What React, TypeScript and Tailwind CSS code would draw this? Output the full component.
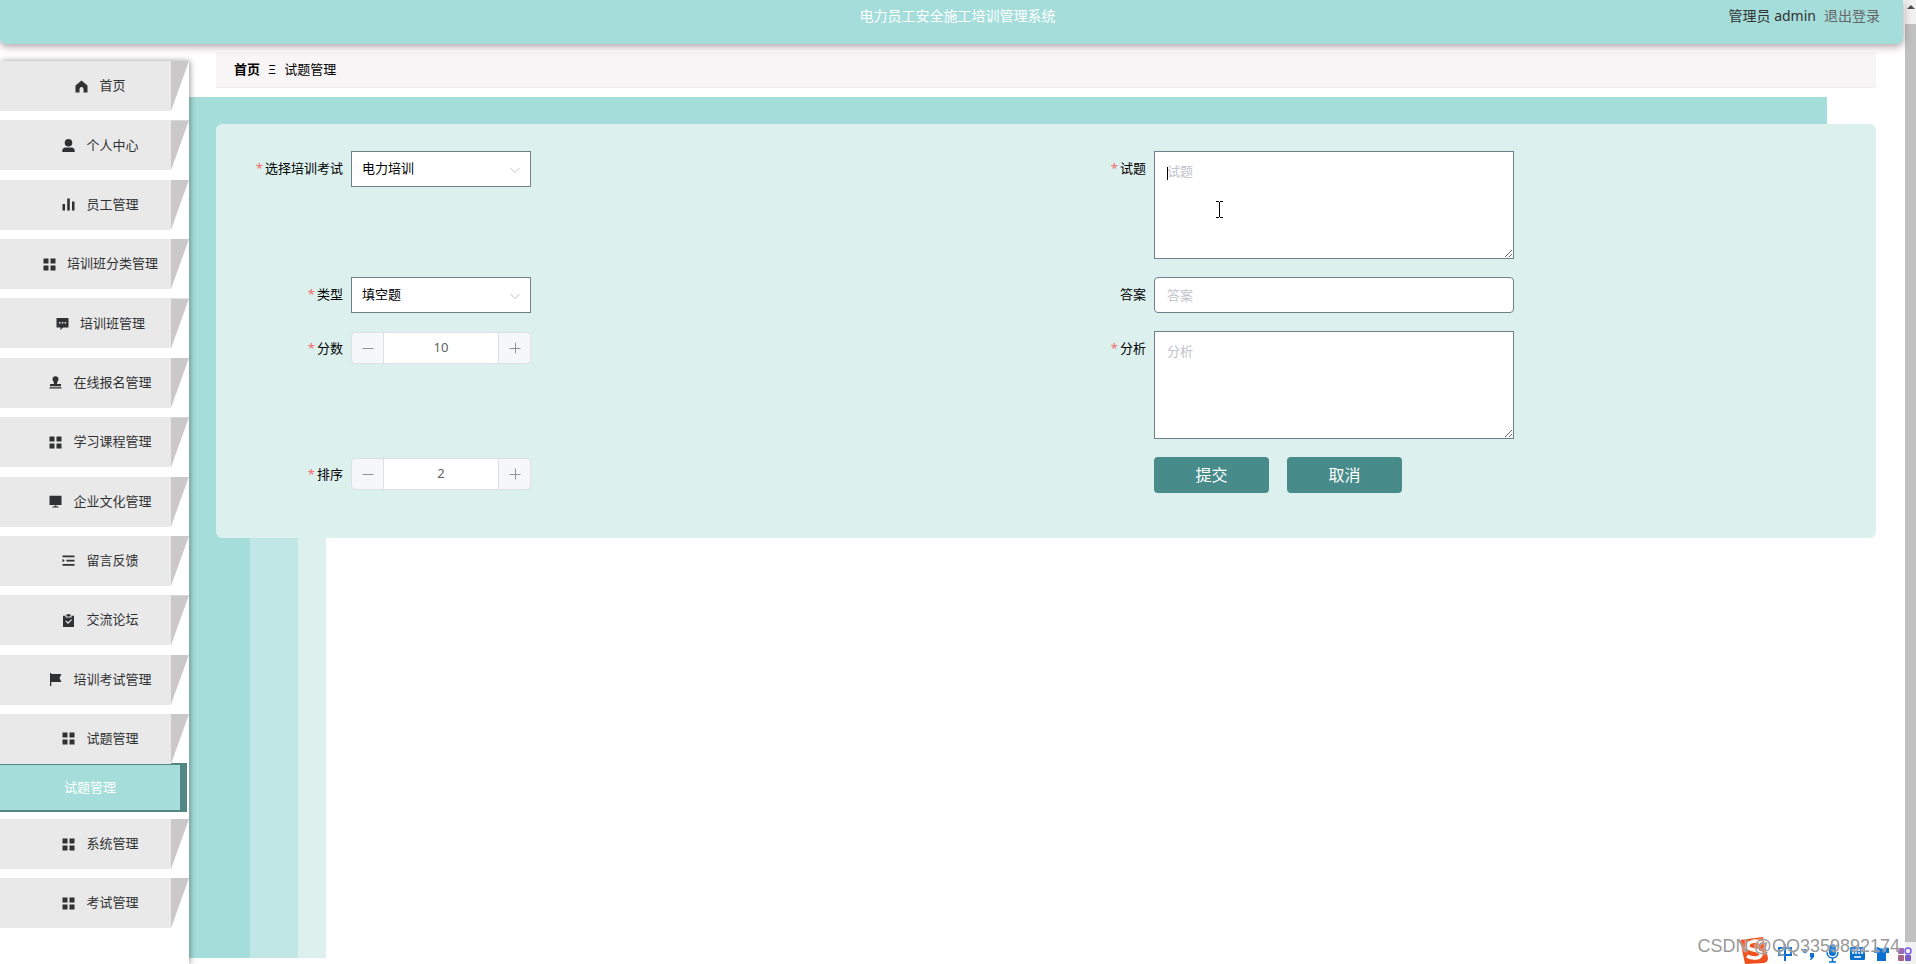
import { useState } from 'react';

const icons: Record<string, React.ReactNode> = {
  home: <path d="M6.5 0.5 L12.5 5.5 V12.5 H8.5 V9 a2 2 0 0 0 -4 0 V12.5 H0.5 V5.5 Z" />,
  user: <path d="M6.5 0 a3.8 3.8 0 1 1 0 7.6 a3.8 3.8 0 0 1 0 -7.6 Z M3.5 8.6 H9.5 A3 3 0 0 1 12.7 11.8 V13 H0.3 V11.8 A3 3 0 0 1 3.5 8.6 Z" />,
  chart: <path d="M0.5 6 H3 V12.5 H0.5 Z M5.2 0.5 H7.8 V12.5 H5.2 Z M10 3.5 H12.5 V12.5 H10 Z" />,
  menu: <path d="M0.5 0.5 H5.5 V5.5 H0.5 Z M7.5 0.5 H12.5 V5.5 H7.5 Z M0.5 7.5 H5.5 V12.5 H0.5 Z M7.5 7.5 H12.5 V12.5 H7.5 Z" />,
  chat: <path fillRule="evenodd" d="M0.5 1 H12.5 V10.5 H7 L4.5 13 V10.5 H0.5 Z M3 5 V6.5 H4.5 V5 Z M5.8 5 V6.5 H7.3 V5 Z M8.6 5 V6.5 H10.1 V5 Z" />,
  stamp: <path d="M6.5 0.3 a3 3 0 0 1 3 3 C9.5 5 8 5.5 8 8 H12 V10.3 H1 V8 H5 C5 5.5 3.5 5 3.5 3.3 a3 3 0 0 1 3 -3 Z M0.5 11.2 H12.5 V12.5 H0.5 Z" />,
  screen: <path d="M0.5 0.8 H12.5 V10 H0.5 Z M5.5 10.6 H7.5 V11.4 H9.5 V12.4 H3.5 V11.4 H5.5 Z" />,
  list: <path d="M0.5 1.5 H12.5 V3.2 H0.5 Z M4.5 5.7 H12.5 V7.4 H4.5 Z M0.5 4.8 L2.8 6.5 L0.5 8.2 Z M0.5 10 H12.5 V11.7 H0.5 Z" />,
  claim: <path fillRule="evenodd" d="M1 1.8 H3.5 V3.4 H9.5 V1.8 H12 V13 H1 Z M4.5 0.3 H8.5 V2.4 H4.5 Z M3.4 7.3 L6 10 L10 6 L9.2 5.2 L6 8.3 L4.3 6.5 Z" />,
  flag: <path d="M1 0 H2.3 V1 H12.5 L10.5 5 L12.5 9 H2.3 V13 H1 Z" />,
};

const menu = [
  { icon: 'home', label: '首页' },
  { icon: 'user', label: '个人中心' },
  { icon: 'chart', label: '员工管理' },
  { icon: 'menu', label: '培训班分类管理' },
  { icon: 'chat', label: '培训班管理' },
  { icon: 'stamp', label: '在线报名管理' },
  { icon: 'menu', label: '学习课程管理' },
  { icon: 'screen', label: '企业文化管理' },
  { icon: 'list', label: '留言反馈' },
  { icon: 'claim', label: '交流论坛' },
  { icon: 'flag', label: '培训考试管理' },
  { icon: 'menu', label: '试题管理' },
];

const bottomMenu = [
  { icon: 'menu', label: '系统管理' },
  { icon: 'menu', label: '考试管理' },
];

const MenuItem = ({ icon, label }: { icon: string; label: string }) => (
  <a href="#" className="flex h-[50px] text-[#303133]">
    <span className="flex flex-1 items-center justify-center gap-[11px] bg-[#e9e9e9] pl-[30px]">
      <svg viewBox="0 0 13 13" className="size-[13px] fill-current">{icons[icon]}</svg>
      {label}
    </span>
    <span className="w-[18px] bg-[#cac8c9] [clip-path:polygon(0_0,100%_0,0_100%)]" />
  </a>
);

interface FieldProps {
  id: string;
  label: string;
  required?: boolean;
  children: React.ReactNode;
}

const Field = ({ id, label, required, children }: FieldProps) => (
  <div className="flex items-start">
    <label htmlFor={id} className="w-[108px] shrink-0 pr-2 text-right leading-[35px] text-black">
      {required && <span className="mr-[2px] text-[#f56c6c]">*</span>}
      {label}
    </label>
    {children}
  </div>
);

const SelectBox = ({ id, options }: { id: string; options: string[] }) => (
  <div className="relative">
    <select id={id} className="block h-9 w-[180px] appearance-none border border-[#708088] bg-white px-[10px] text-black outline-none">
      {options.map((o) => <option key={o}>{o}</option>)}
    </select>
    <svg viewBox="0 0 12 12" className="pointer-events-none absolute top-[13px] right-[10px] size-3 fill-none stroke-[#c0c4cc]">
      <path d="M1.5 4 L6 8.5 L10.5 4" />
    </svg>
  </div>
);

const NumberBox = ({ id, initial }: { id: string; initial: number }) => {
  const [value, setValue] = useState(initial);
  return (
    <div className="mt-px flex h-8 w-[180px] overflow-hidden rounded-sm border border-[#dcdfe6] bg-[#f5f7fa] text-[#606266]">
      <button type="button" aria-label="减少" onClick={() => setValue(value - 1)} className="flex w-[31px] items-center justify-center">
        <svg viewBox="0 0 12 12" className="size-3 stroke-[#909399]"><path d="M0.5 6.5 H11.5" /></svg>
      </button>
      <input id={id} value={value} onChange={(e) => setValue(Number(e.target.value) || 0)} className="min-w-0 flex-1 border-x border-[#dcdfe6] bg-white text-center outline-none" />
      <button type="button" aria-label="增加" onClick={() => setValue(value + 1)} className="flex w-[31px] items-center justify-center">
        <svg viewBox="0 0 12 12" className="size-3 stroke-[#909399]"><path d="M0.5 6.5 H11.5 M6.5 0.5 V11.5" /></svg>
      </button>
    </div>
  );
};

const TextBox = ({ id, placeholder }: { id: string; placeholder: string }) => (
  <textarea id={id} placeholder={placeholder} className="block h-[108px] w-[360px] resize border border-[#708088] bg-white px-3 py-[9px] leading-5 outline-none placeholder:text-[#c0c4cc]" />
);

const InputTray = () => (
  <svg viewBox="0 0 178 28" className="absolute right-px bottom-0 h-[28px] w-[178px] fill-[#0b6fd0]">
    <path d="M3 4 L26 1 L31 22 Q31 26 27 27 L8 28 Z" fill="#f0501e" />
    <path d="M25 7 C18 3 10 6 11 11 C12 15 24 13 24 18 C24 23 15 23 10 20" fill="none" stroke="#fff" strokeWidth="3.5" />
    <path d="M42 12 H54 V19 H42 Z M48 8 V25" fill="none" stroke="#0b6fd0" strokeWidth="2" />
    <circle cx="68" cy="15" r="2.2" />
    <path d="M73 17 H77 V21 L74 24 H73 L74 21 H73 Z" />
    <rect x="92" y="8" width="7" height="12" rx="3.5" />
    <path d="M90 16 C90 24 101 24 101 16 M95.5 22 V26 M92 26 H99" fill="none" stroke="#0b6fd0" strokeWidth="1.5" />
    <rect x="113" y="11" width="15" height="13" rx="1" />
    <path d="M115 14 H126 M115 17 H126" fill="none" stroke="#fff" strokeWidth="1.5" strokeDasharray="2 1" />
    <path d="M117 21 H124" fill="none" stroke="#fff" strokeWidth="1.5" />
    <path d="M137 12 L141 11 Q145 14 148 11 L152 12 V17 H149 V25 H140 V17 H137 Z" />
    <g fill="#7b5bc8">
      <rect x="161" y="12" width="6" height="6" rx="1" fill="#9a68b0" />
      <circle cx="171" cy="15" r="3" fill="none" stroke="#7b5bea" strokeWidth="1.5" />
      <rect x="161" y="19" width="6" height="6" rx="1" fill="#a8688c" />
      <rect x="168" y="19" width="6" height="6" rx="1" />
    </g>
  </svg>
);

export default function App() {
  return (
    <div className="relative flex h-screen overflow-hidden bg-white font-['Noto_Sans','Noto_Sans_CJK_SC',sans-serif] text-[13px]">
      <div className="flex min-w-0 flex-1 flex-col">
        <header className="z-10 mr-[2px] grid h-11 shrink-0 grid-cols-3 rounded-b-md bg-[#a5dddb] pl-3 text-sm leading-8 shadow-[0_2px_8px_rgba(80,50,60,0.5)]">
          <h1 className="col-start-2 text-center text-white">电力员工安全施工培训管理系统</h1>
          <div className="flex justify-end gap-2 pr-[23px] text-[#333]">
            <span>管理员 admin</span>
            <a href="#" className="text-[#666]">退出登录</a>
          </div>
        </header>

        <div className="flex min-h-0 flex-1">
          <nav className="z-[1] mt-[17px] w-[189px] shrink-0 bg-white shadow-[1px_0_6px_rgba(0,0,0,0.4)]">
            <div className="flex h-[703px] flex-col justify-between">
              {menu.map((m) => <MenuItem key={m.label} {...m} />)}
            </div>
            <a href="#" className="-mt-px mr-[2px] mb-[7px] flex h-[49px] items-center justify-center border-y-2 border-r-[7px] border-[#548684] bg-[#a5dddb] text-white">
              试题管理
            </a>
            <div className="flex flex-col gap-[9px]">
              {bottomMenu.map((m) => <MenuItem key={m.label} {...m} />)}
            </div>
          </nav>

          <main className="flex min-w-0 flex-1 flex-col pb-[6px]">
            <div className="mt-2 mr-[29px] mb-[9px] ml-[27px] flex h-9 items-center gap-2 border-b border-[#eee] bg-[#f7f5f6] px-[18px] text-black">
              <a href="#" className="font-bold">首页</a>
              <span>Ξ</span>
              <span>试题管理</span>
            </div>
            <div className="mr-[78px] h-[27px] bg-[#a5dddb]" />
            <div className="flex-1 bg-[linear-gradient(to_right,#a5dddb_61px,#c0e6e6_61px,#c0e6e6_109px,#def0ee_109px,#def0ee_137px,#fff_137px)]">
              <form className="mr-[29px] ml-[27px] grid grid-cols-2 gap-y-[18px] rounded-md bg-[#dcf1ee] px-[27px] pt-[27px] pb-[45px]">
                <Field id="exam" label="选择培训考试" required>
                  <SelectBox id="exam" options={['电力培训']} />
                </Field>
                <Field id="question" label="试题" required>
                  <div className="relative">
                    <TextBox id="question" placeholder="试题" />
                    <span className="absolute top-4 left-[13px] h-[13px] w-px bg-black" />
                    <svg viewBox="0 0 9 17" className="absolute top-[50px] left-[61px] h-[17px] w-[9px] fill-none stroke-black">
                      <path d="M1 0.5 H4 M5 0.5 H8 M4.5 1 V16 M1 16.5 H4 M5 16.5 H8" />
                    </svg>
                  </div>
                </Field>
                <Field id="type" label="类型" required>
                  <SelectBox id="type" options={['填空题']} />
                </Field>
                <Field id="answer" label="答案">
                  <input id="answer" placeholder="答案" className="h-9 w-[360px] rounded border border-[#708088] bg-white px-3 outline-none placeholder:text-[#c0c4cc]" />
                </Field>
                <Field id="score" label="分数" required>
                  <NumberBox id="score" initial={10} />
                </Field>
                <Field id="analysis" label="分析" required>
                  <TextBox id="analysis" placeholder="分析" />
                </Field>
                <Field id="order" label="排序" required>
                  <NumberBox id="order" initial={2} />
                </Field>
                <div className="flex gap-[18px] pl-[108px] text-base text-white">
                  <button type="button" className="h-9 w-[115px] rounded bg-[#478c8b]">提交</button>
                  <button type="button" className="h-9 w-[115px] rounded bg-[#478c8b]">取消</button>
                </div>
              </form>
            </div>
          </main>
        </div>
      </div>

      {/* page scrollbar */}
      <div className="flex w-[11px] flex-col bg-[#f1f1f1] pb-[22px]">
        <svg viewBox="0 0 11 24" className="h-6 w-[11px] fill-[#505050]"><path d="M2 9 L6 5 L10 9 Z" /></svg>
        <div className="flex-1 bg-[#c1c1c1]" />
      </div>

      <InputTray />
      <p className="absolute right-4 bottom-[6px] font-['Liberation_Sans',sans-serif] text-lg leading-6 text-[#999] [text-shadow:0_0_2px_#fff]">CSDN @QQ3359892174</p>
    </div>
  );
}
